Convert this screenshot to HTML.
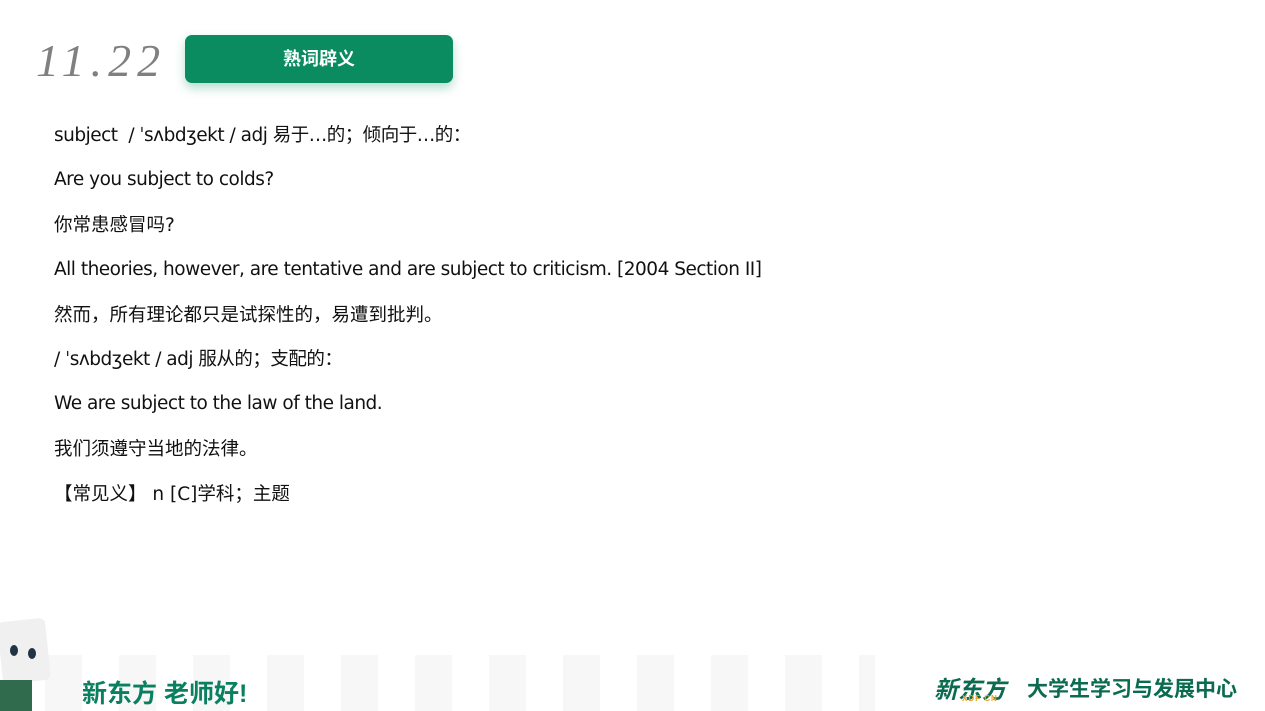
<!DOCTYPE html>
<html><head><meta charset="utf-8"><style>
body{margin:0;width:1265px;height:711px;background:#fff;position:relative;overflow:hidden;font-family:"Liberation Sans","Noto Sans CJK SC",sans-serif;}
.date{position:absolute;left:36px;top:34px;font-family:"Liberation Serif",serif;font-style:italic;font-size:46px;color:#808080;letter-spacing:6px;}
.btn{position:absolute;left:185px;top:35px;width:268px;height:48px;background:#0a8c60;border-radius:7px;box-shadow:0 5px 10px rgba(10,140,96,.3);color:#fff;font-weight:bold;font-size:18px;text-align:center;line-height:48px;}
.l{position:absolute;left:54px;font-size:18.5px;color:#111;white-space:nowrap;font-family:"DejaVu Sans","Noto Sans CJK SC",sans-serif;letter-spacing:-0.5px;}
.c{letter-spacing:0;}
.band{position:absolute;left:45px;top:655px;width:830px;height:56px;background:repeating-linear-gradient(90deg,#f7f7f7 0 37px,#fff 37px 74px);}
.hello{position:absolute;left:82px;top:674px;font-size:25px;font-weight:bold;color:#0a8060;}
.logo{position:absolute;left:934px;top:670px;font-size:24px;font-weight:bold;font-style:italic;color:#0a6b4f;}
.xdf{position:absolute;left:962px;top:694px;font-size:8px;font-weight:bold;color:#e8a020;letter-spacing:1px;}
.cen{position:absolute;left:1027px;top:673px;font-size:21px;font-weight:bold;color:#0a6b4f;}
</style></head><body>
<div class="date">11.22</div>
<div class="btn">熟词辟义</div>
<div class="l" style="top:121px">subject &nbsp;/ ˈsʌbdʒekt / adj 易于…的；倾向于…的：</div>
<div class="l" style="top:169px">Are you subject to colds?</div>
<div class="l c" style="top:211px">你常患感冒吗?</div>
<div class="l" style="top:259px">All theories, however, are tentative and are subject to criticism. [2004 Section II]</div>
<div class="l c" style="top:301px">然而，所有理论都只是试探性的，易遭到批判。</div>
<div class="l" style="top:345px">/ ˈsʌbdʒekt / adj 服从的；支配的：</div>
<div class="l" style="top:393px">We are subject to the law of the land.</div>
<div class="l c" style="top:435px">我们须遵守当地的法律。</div>
<div class="l c" style="top:480px">【常见义】 n [C]学科；主题</div>
<div class="band"></div>
<div style="position:absolute;left:0;top:620px;width:48px;height:62px;background:#f0f0f0;border-radius:6px;transform:rotate(-6deg)"></div>
<div style="position:absolute;left:10px;top:645px;width:8px;height:11px;border-radius:50%;background:#234"></div>
<div style="position:absolute;left:28px;top:648px;width:8px;height:11px;border-radius:50%;background:#234"></div>
<div style="position:absolute;left:0;top:680px;width:32px;height:31px;background:#2f6b4c;"></div>
<div class="hello">新东方 老师好!</div>
<div class="logo">新东方</div>
<div class="xdf">XDF CN</div>
<div class="cen">大学生学习与发展中心</div>
</body></html>
